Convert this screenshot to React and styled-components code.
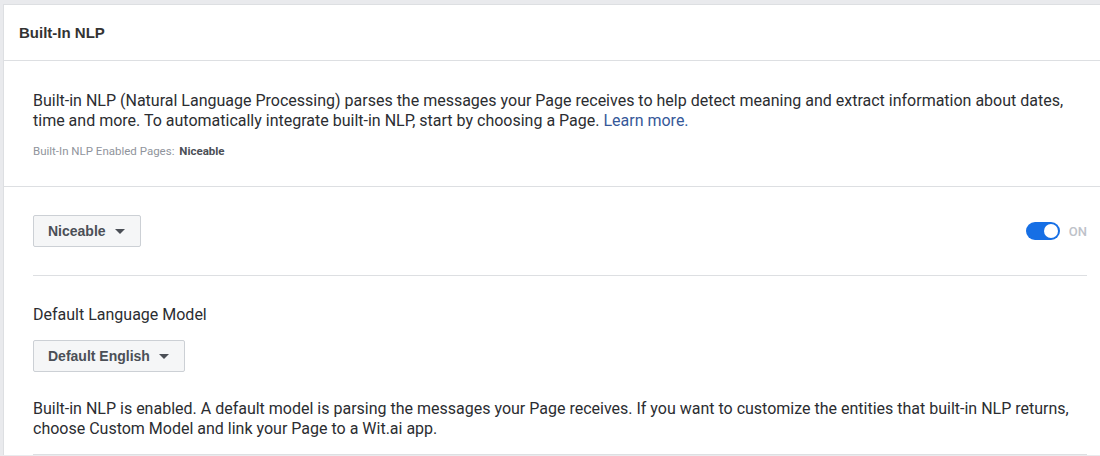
import styled, { createGlobalStyle } from "styled-components";

const Global = createGlobalStyle`
  body {
    margin: 0;
    background: #e9eaed;
    overflow: hidden;
    font-family: Roboto, "Liberation Sans", sans-serif;
  }
`;

const Page = styled.div`
  padding: 4px 0 0 3px;
  width: 1100px;
  height: 456px;
  box-sizing: border-box;
`;

const Card = styled.div`
  width: 1114px;
  background: #fff;
  border: 1px solid #dddfe2;
  border-right: none;
  border-bottom: none;
  box-sizing: border-box;
`;

const Header = styled.div`
  height: 55px;
  padding: 0 15px;
  display: flex;
  align-items: center;
  border-bottom: 1px solid #dddfe2;
  font-family: "Liberation Sans", Arial, sans-serif;
  font-weight: bold;
  font-size: 15px;
  color: #333;
`;

const Section = styled.div`
  padding: ${(p) => p.$pad || "0 29px"};
  border-bottom: ${(p) => (p.$line ? "1px solid #dddfe2" : "none")};
`;

const Text = styled.p`
  margin: 0;
  font-size: 16px;
  line-height: 20px;
  color: #2b2d31;
`;

const Link = styled.a`
  color: #365899;
  text-decoration: none;
`;

const Meta = styled.div`
  margin-top: 13px;
  font-size: 11.5px;
  line-height: 14px;
  color: #90949c;

  b {
    margin-left: 2px;
    color: #4b4f56;
  }
`;

const Row = styled.div`
  display: flex;
  align-items: center;
  justify-content: space-between;
  padding: ${(p) => p.$pad || "0"};
  border-bottom: ${(p) => (p.$line ? "1px solid #dddfe2" : "none")};
`;

const Select = styled.button`
  height: 32px;
  padding: 0 15px 0 14px;
  display: inline-flex;
  align-items: center;
  gap: 9px;
  background: #f5f6f7;
  border: 1px solid #ccd0d5;
  border-radius: 2px;
  font-family: "Liberation Sans", Arial, sans-serif;
  font-weight: bold;
  font-size: 14px;
  color: #4b4f56;
`;

const Caret = styled.span`
  width: 0;
  height: 0;
  border-left: 5px solid transparent;
  border-right: 5px solid transparent;
  border-top: 5px solid #4b4f56;
  margin-top: 1px;
`;

const ToggleWrap = styled.div`
  display: flex;
  align-items: center;
  gap: 9px;
`;

const Track = styled.div`
  width: 34px;
  height: 18px;
  border-radius: 9px;
  background: #166fe5;
  display: flex;
  align-items: center;
  justify-content: flex-end;
  padding: 0 2px;
  box-sizing: border-box;
`;

const Knob = styled.div`
  width: 14px;
  height: 14px;
  border-radius: 50%;
  background: #fff;
`;

const ToggleLabel = styled.span`
  font-size: 13px;
  font-weight: 500;
  color: #bec2c9;
`;

const Label = styled.div`
  font-size: 16px;
  line-height: 20px;
  color: #2b2d31;
  margin-bottom: 15px;
`;

const Wrapper = styled.div`
  padding: 0 30px 0 29px;
`;

export default function App() {
  return (
    <Page>
      <Global />
      <Card>
        <Header>Built-In NLP</Header>
        <Section $pad="30px 29px 28px" $line>
          <Text>
            Built-in NLP (Natural Language Processing) parses the messages your
            Page receives to help detect meaning and extract information about
            dates, time and more. To automatically integrate built-in NLP, start
            by choosing a Page. <Link href="#">Learn more.</Link>
          </Text>
          <Meta>
            Built-In NLP Enabled Pages: <b>Niceable</b>
          </Meta>
        </Section>
        <Wrapper>
          <Row $pad="28px 0" $line>
            <Select>
              Niceable <Caret />
            </Select>
            <ToggleWrap>
              <Track>
                <Knob />
              </Track>
              <ToggleLabel>ON</ToggleLabel>
            </ToggleWrap>
          </Row>
          <Section $pad="29px 0 0">
            <Label>Default Language Model</Label>
            <Select>
              Default English <Caret />
            </Select>
          </Section>
          <Section $pad="27px 0 15px" $line>
            <Text>
              Built-in NLP is enabled. A default model is parsing the messages
              your Page receives. If you want to customize the entities that
              built-in NLP returns, choose Custom Model and link your Page to a
              Wit.ai app.
            </Text>
          </Section>
        </Wrapper>
      </Card>
    </Page>
  );
}
